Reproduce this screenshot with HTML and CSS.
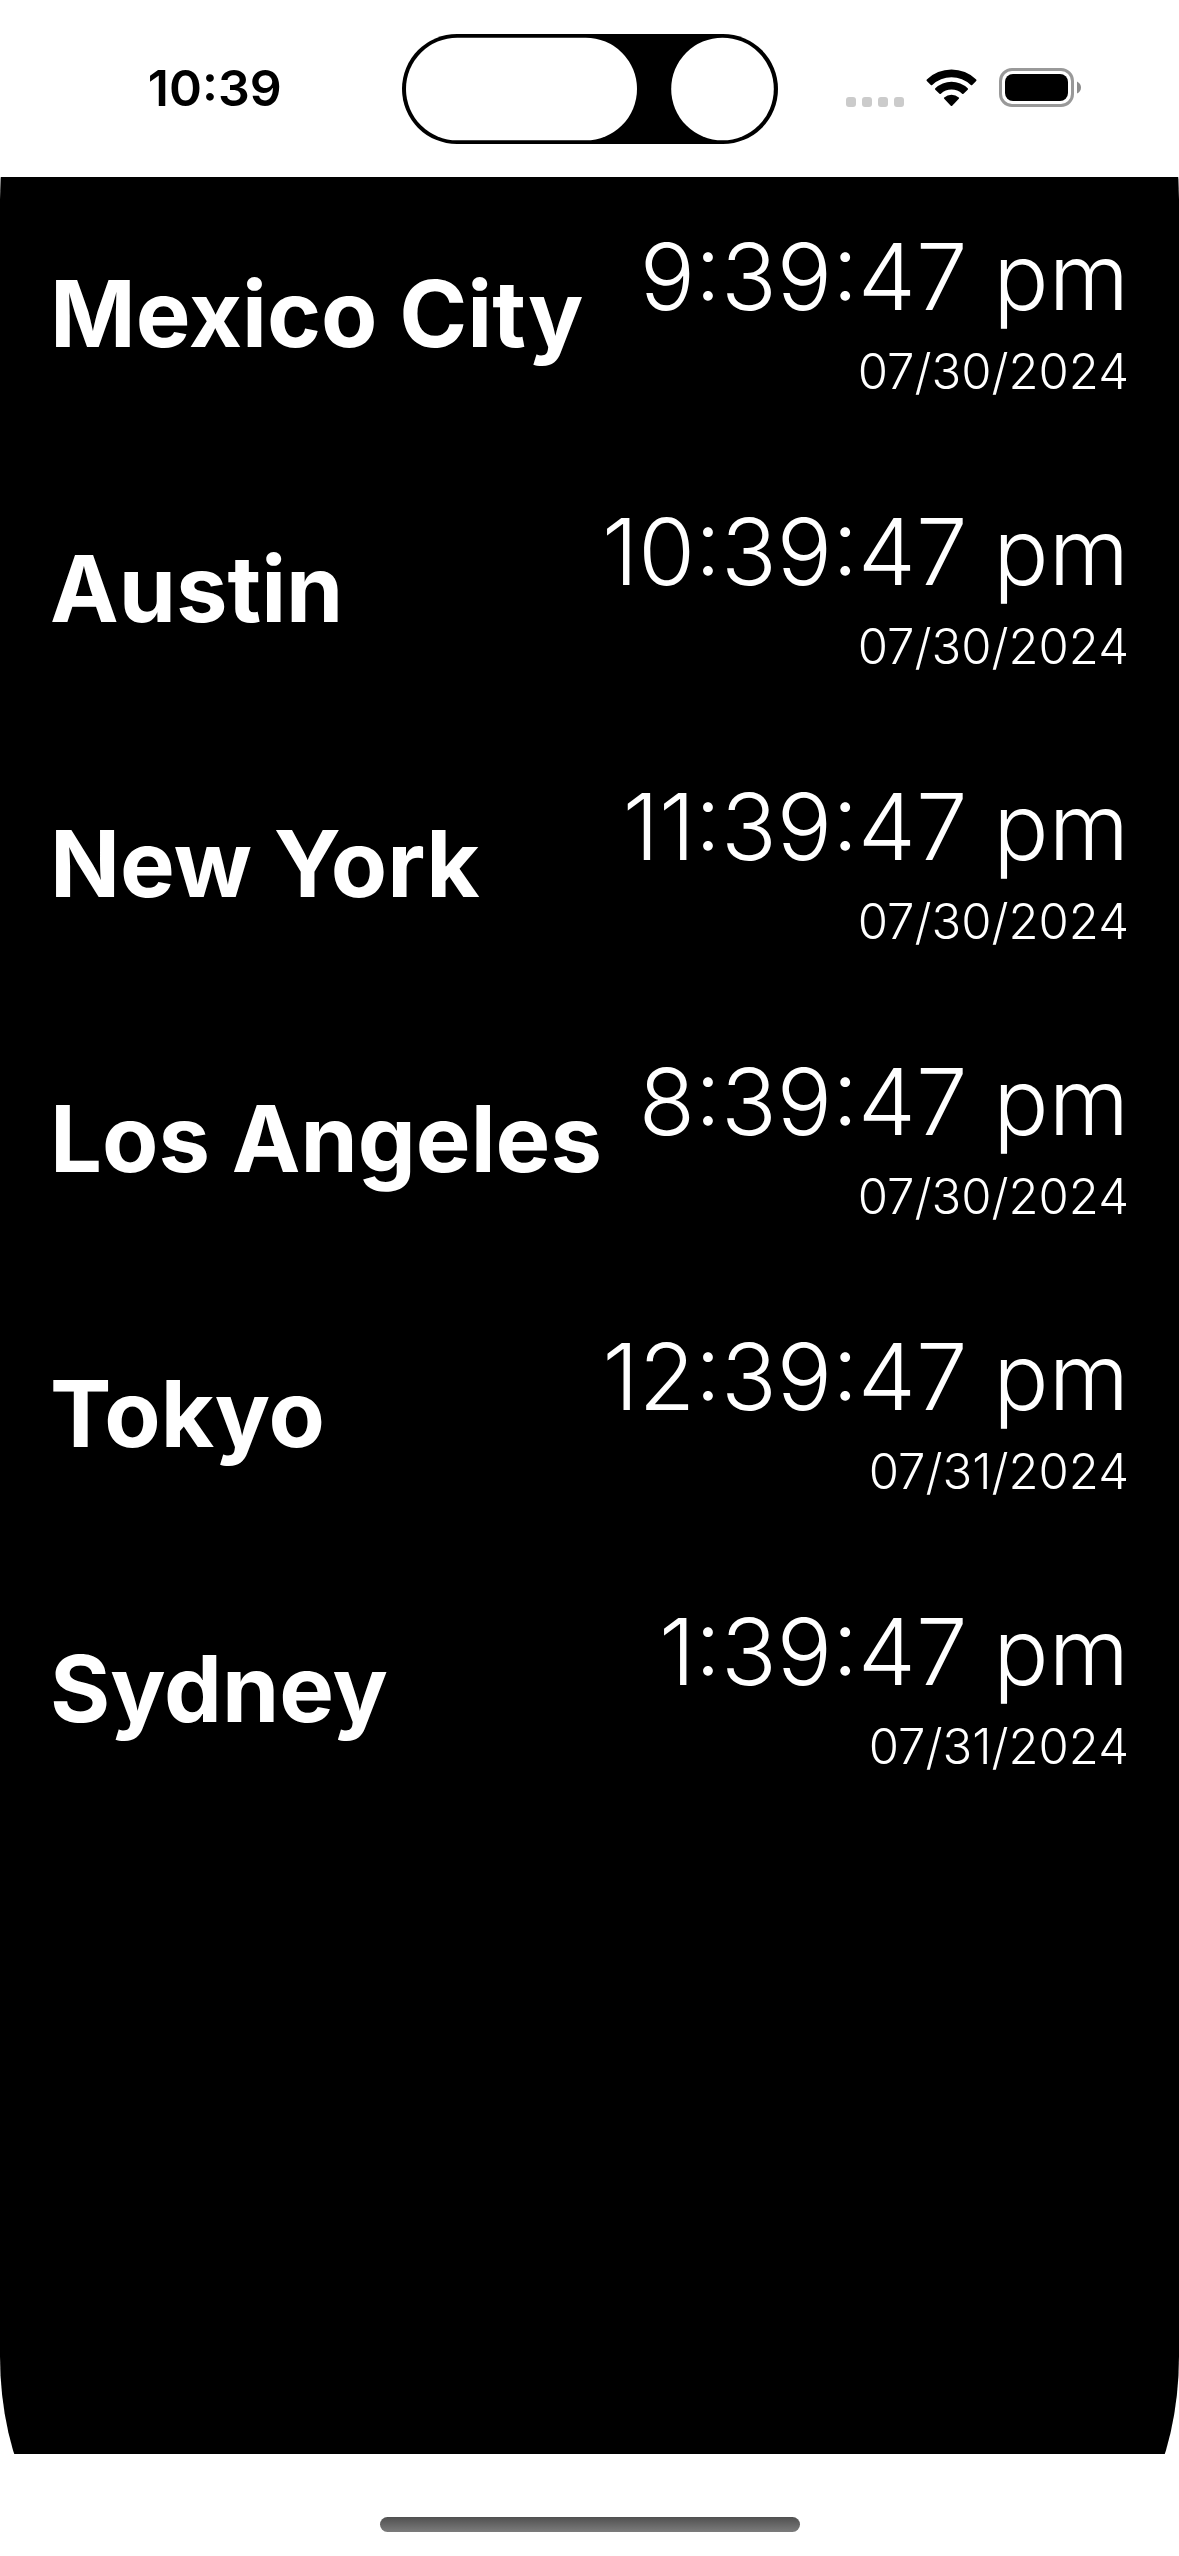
FILE: index.html
```html
<!DOCTYPE html>
<html lang="en">
<head>
<meta charset="utf-8">
<meta name="viewport" content="width=device-width, initial-scale=1">
<title>World Clock</title>
<link rel="stylesheet" href="styles.css">
</head>
<body>
<header class="status">
  <time class="status-time">10:39</time>
  <svg class="island" viewBox="0 0 376 110" aria-hidden="true">
    <rect width="376" height="110" rx="55" fill="#000"/>
    <rect x="4" y="3.700" width="231" height="102.600" rx="51.300" fill="#fff"/>
    <circle cx="320.500" cy="55" r="51.300" fill="#fff"/>
  </svg>
  <div class="indicators">
    <svg class="signal" viewBox="0 0 58 10" aria-hidden="true"><g fill="#cbcbcb"><rect width="10" height="10" rx="3"/><rect x="16" width="10" height="10" rx="3"/><rect x="32" width="10" height="10" rx="3"/><rect x="48" width="10" height="10" rx="3"/></g></svg>
    <svg class="wifi" viewBox="0 0 51 38" aria-hidden="true">
      <path d="M.8 10.500A35.500 35.500 0 0 1 50.200 10.500Q50.800 11.300 50.200 12L46.200 15.900Q45.500 16.500 44.800 15.900A28 28 0 0 0 6.200 15.900Q5.500 16.500 4.800 15.900L.8 12Q.2 11.300.8 10.500z"/>
      <path d="M9.300 19.300A23.500 23.500 0 0 1 41.700 19.300Q42.400 20 41.700 20.700L37.500 24.800Q36.800 25.400 36.100 24.800A15.500 15.500 0 0 0 14.900 24.800Q14.200 25.400 13.500 24.800L9.300 20.700Q8.600 20 9.300 19.300z"/>
      <path d="M18.200 28.500A11 11 0 0 1 32.800 28.500Q33.400 29.100 32.800 29.800L26.200 36.700Q25.500 37.300 24.800 36.700L18.200 29.800Q17.600 29.100 18.200 28.500z"/>
    </svg>
    <svg class="battery" viewBox="0 0 82 39" aria-hidden="true">
      <rect x="1.500" y="1.500" width="72" height="36" rx="11.500" fill="none" stroke="#999" stroke-width="3"/>
      <rect x="6" y="6" width="63" height="27" rx="8"/>
      <path d="M78 13.500Q82 15.500 82 19.500T78 25.500z" fill="#8c8c8c"/>
    </svg>
  </div>
</header>
<main class="clocks">
  <ul class="list">
    <li class="row"><h2 class="city">Mexico City</h2><div class="when"><time class="time">9:39:47 pm</time><time class="date">07/30/2024</time></div></li>
    <li class="row"><h2 class="city">Austin</h2><div class="when"><time class="time">10:39:47 pm</time><time class="date">07/30/2024</time></div></li>
    <li class="row"><h2 class="city">New York</h2><div class="when"><time class="time">11:39:47 pm</time><time class="date">07/30/2024</time></div></li>
    <li class="row"><h2 class="city">Los Angeles</h2><div class="when"><time class="time">8:39:47 pm</time><time class="date">07/30/2024</time></div></li>
    <li class="row"><h2 class="city">Tokyo</h2><div class="when"><time class="time">12:39:47 pm</time><time class="date">07/31/2024</time></div></li>
    <li class="row"><h2 class="city">Sydney</h2><div class="when"><time class="time">1:39:47 pm</time><time class="date">07/31/2024</time></div></li>
  </ul>
</main>
<footer class="bottom"><div class="home"></div></footer>
</body>
</html>
```
FILE: styles.css
```css
* { box-sizing: border-box; }
body { margin: 0; min-height: 100vh; display: flex; flex-direction: column; background: #fff; color: #000; font-family: Inter, "Liberation Sans", sans-serif; }
.status { height: 177px; display: grid; grid-template-columns: 1fr 376px 1fr; align-items: start; padding-top: 34px; }
.status-time { font-size: 50px; line-height: 108px; font-weight: 600; justify-self: center; padding-left: 28px; }
.island { width: 376px; height: 110px; }
.indicators { display: flex; align-items: flex-end; height: 73px; padding-left: 68px; }
.signal { width: 58px; height: 10px; margin-right: 22px; }
.wifi { width: 51px; height: 38px; margin-right: 22px; }
.battery { width: 82px; height: 39px; }

.clocks { flex: 1; background: #000; color: #fff; clip-path: inset(-177px 0 -102px round 110px / 200px); }
.list { list-style: none; margin: 0; padding: 39px 50px; }
.row { display: flex; justify-content: space-between; align-items: center; height: 275px; padding-bottom: 80px; }
.city { margin: 0; font-size: 92px; line-height: 116px; font-weight: 700; white-space: nowrap; }
.when { text-align: right; white-space: nowrap; }
.time { display: block; font-size: 92px; line-height: 116px; font-weight: 300; }
.date { display: block; font-size: 49px; line-height: 74px; font-weight: 300; }
.bottom { height: 102px; padding-top: 63px; }
.home { width: 420px; height: 15px; border-radius: 8px; background: linear-gradient(#505050, #7c7c7c); margin: 0 auto; }
```
